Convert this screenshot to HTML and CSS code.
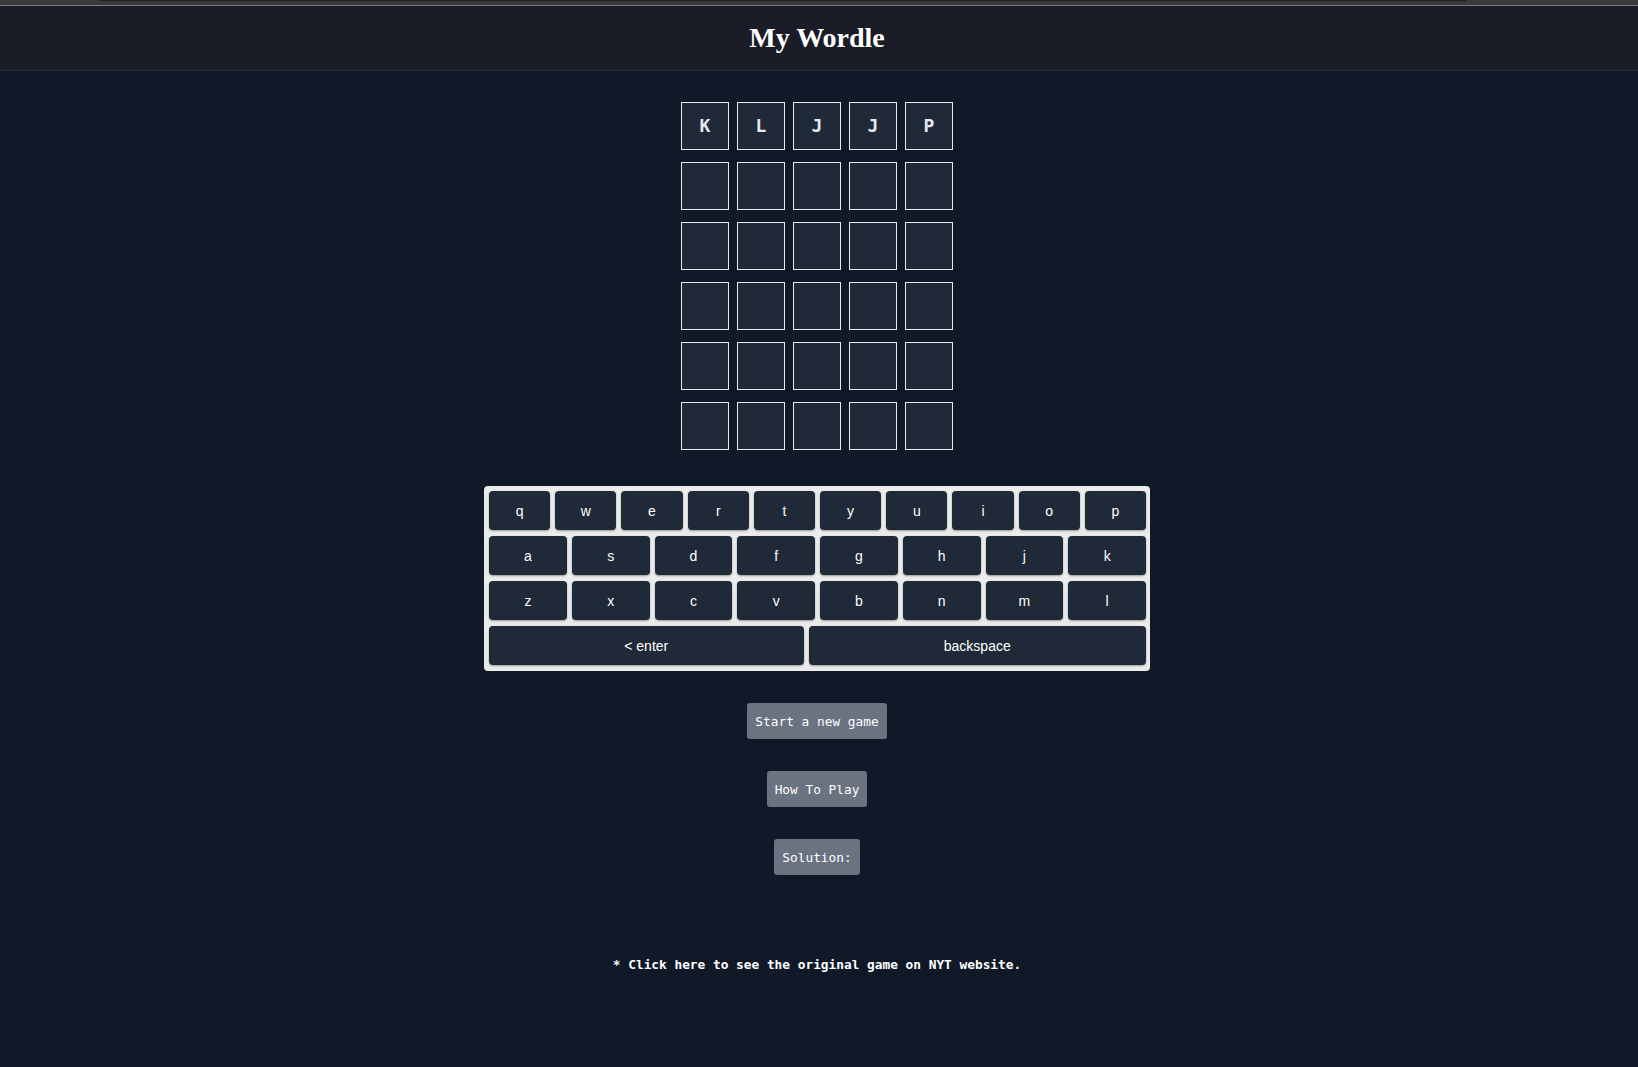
FILE: index.html
```html
<!DOCTYPE html>
<html lang="en">
<head>
<meta charset="utf-8">
<title>My Wordle</title>
<link rel="stylesheet" href="styles.css">
</head>
<body>
<div class="chrome"><div class="chrome-bar"></div></div>
<header class="header">
  <h1 class="title">My Wordle</h1>
</header>
<main class="main">
  <div class="board">
    <div class="tile">K</div><div class="tile">L</div><div class="tile">J</div><div class="tile">J</div><div class="tile">P</div>
    <div class="tile"></div><div class="tile"></div><div class="tile"></div><div class="tile"></div><div class="tile"></div>
    <div class="tile"></div><div class="tile"></div><div class="tile"></div><div class="tile"></div><div class="tile"></div>
    <div class="tile"></div><div class="tile"></div><div class="tile"></div><div class="tile"></div><div class="tile"></div>
    <div class="tile"></div><div class="tile"></div><div class="tile"></div><div class="tile"></div><div class="tile"></div>
    <div class="tile"></div><div class="tile"></div><div class="tile"></div><div class="tile"></div><div class="tile"></div>
  </div>

  <div class="keyboard">
    <div class="krow">
      <button class="key">q</button><button class="key">w</button><button class="key">e</button><button class="key">r</button><button class="key">t</button><button class="key">y</button><button class="key">u</button><button class="key">i</button><button class="key">o</button><button class="key">p</button>
    </div>
    <div class="krow">
      <button class="key">a</button><button class="key">s</button><button class="key">d</button><button class="key">f</button><button class="key">g</button><button class="key">h</button><button class="key">j</button><button class="key">k</button>
    </div>
    <div class="krow">
      <button class="key">z</button><button class="key">x</button><button class="key">c</button><button class="key">v</button><button class="key">b</button><button class="key">n</button><button class="key">m</button><button class="key">l</button>
    </div>
    <div class="krow">
      <button class="key key-wide">&lt; enter</button><button class="key key-wide">backspace</button>
    </div>
  </div>

  <div class="actions">
    <button class="btn">Start a new game</button>
    <button class="btn">How To Play</button>
    <button class="btn">Solution:</button>
  </div>

  <p class="footer"><a class="footer-link" href="#">* Click here to see the original game on NYT website.</a></p>
</main>
</body>
</html>
```

FILE: styles.css
```css
* { box-sizing: border-box; }

html, body {
  margin: 0;
  padding: 0;
  background: #111827;
}

body {
  min-height: 1067px;
  font-family: "Liberation Sans", Arial, sans-serif;
}

.chrome {
  height: 6px;
  background: #3a3a3c;
  border-bottom: 1px solid #7a7a7c;
  padding: 0 172px 0 100px;
}

.chrome-bar {
  height: 1px;
  background: #1e1e1e;
}

.header {
  height: 65px;
  background: #1a1d27;
  border-bottom: 1px solid #2a2b2f;
  padding-right: 4px;
  display: flex;
  align-items: center;
  justify-content: center;
}

.title {
  margin: 0;
  font-family: "Liberation Serif", Georgia, serif;
  font-weight: 700;
  font-size: 28px;
  color: #ffffff;
  line-height: 1;
}

.main {
  padding: 31px 4px 0 0;
  display: flex;
  flex-direction: column;
  align-items: center;
}

.board {
  display: grid;
  grid-template-columns: repeat(5, 48px);
  grid-auto-rows: 48px;
  column-gap: 8px;
  row-gap: 12px;
}

.tile {
  border: 1.5px solid #e5e7eb;
  background: #1f2937;
  color: #e5e7eb;
  display: flex;
  align-items: center;
  justify-content: center;
  padding-bottom: 2px;
  font-family: "DejaVu Sans Mono", monospace;
  font-size: 18px;
  font-weight: 700;
}

.keyboard {
  margin-top: 36px;
  width: 666px;
  background: #ebebeb;
  border-radius: 4px;
  padding: 5px 4px 6px 5px;
  display: flex;
  flex-direction: column;
  gap: 6px;
}

.krow {
  display: flex;
  gap: 5px;
}

.key {
  flex: 1 1 0;
  height: 39px;
  padding: 0;
  border: none;
  border-radius: 4px;
  background: #1f2937;
  color: #ffffff;
  font-family: "Liberation Sans", Arial, sans-serif;
  font-size: 14px;
  box-shadow: 0 1px 2px rgba(0, 0, 0, 0.35);
}

.key-wide {
  flex: 1 1 auto;
}

.actions {
  margin-top: 32px;
  display: flex;
  flex-direction: column;
  align-items: center;
  gap: 32px;
}

.btn {
  height: 36px;
  padding: 0 8px;
  border: none;
  border-radius: 3px;
  background: #6b7280;
  color: #ffffff;
  font-family: "DejaVu Sans Mono", monospace;
  font-size: 12.8px;
}

.footer {
  margin: 82px 0 0;
  font-family: "DejaVu Sans Mono", monospace;
  font-size: 12.8px;
  font-weight: 700;
  line-height: 16px;
}

.footer-link {
  color: #ffffff;
  text-decoration: none;
}
```
